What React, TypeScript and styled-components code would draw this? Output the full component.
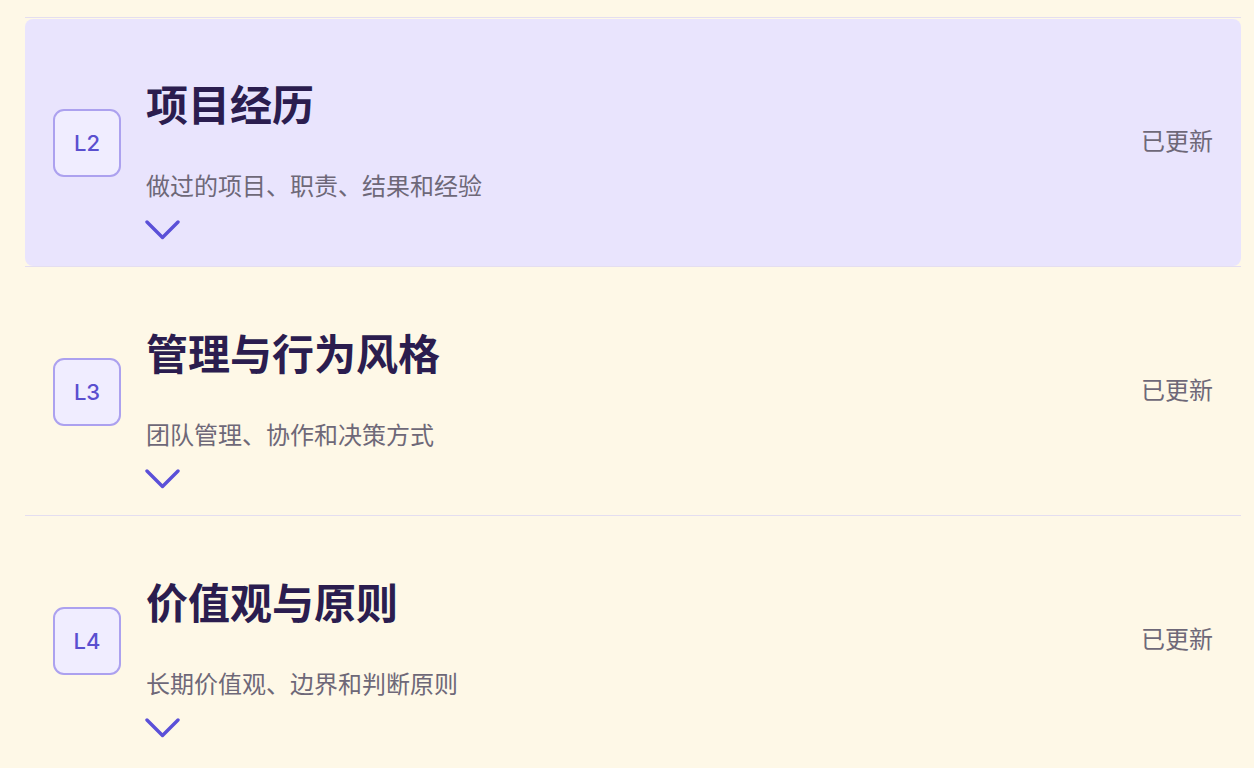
import React from "react";
import styled, { createGlobalStyle } from "styled-components";

const GlobalStyle = createGlobalStyle`
  html, body {
    margin: 0;
    padding: 0;
    background: #fef8e7;
  }
  body {
    font-family: "Noto Sans CJK SC", "Noto Sans", sans-serif;
  }
`;

const Page = styled.div`
  width: 1254px;
  height: 768px;
  overflow: hidden;
  background: #fef8e7;
  padding-top: 17px;
  box-sizing: border-box;
`;

const List = styled.div`
  margin-left: 25px;
  width: 1216px;
  display: flex;
  flex-direction: column;
`;

const Item = styled.div`
  border-top: 1px solid #e4def0;
  padding-top: 1px;
`;

const Card = styled.div<{ $active?: boolean }>`
  height: 247px;
  box-sizing: border-box;
  display: flex;
  align-items: center;
  padding: 0 28px;
  border-radius: 8px;
  background: ${(p) => (p.$active ? "#e9e4fd" : "transparent")};
`;

const Badge = styled.div`
  width: 68px;
  height: 68px;
  box-sizing: border-box;
  flex: none;
  border: 2px solid #aca1ef;
  border-radius: 11px;
  background: #f0edff;
  color: #5a4fcf;
  font-family: Inter, "Noto Sans", sans-serif;
  font-weight: 500;
  font-size: 22px;
  display: flex;
  align-items: center;
  justify-content: center;
`;

const TextBlock = styled.div`
  flex: 1;
  margin-left: 25px;
  padding-top: 33px;
  display: flex;
  flex-direction: column;
  align-items: flex-start;
`;

const Title = styled.div`
  font-size: 42px;
  line-height: 50px;
  font-weight: 700;
  color: #2b1d4f;
`;

const Subtitle = styled.div`
  margin-top: 40px;
  font-size: 24px;
  line-height: 34px;
  color: #6e6878;
`;

const Chevron = styled.svg`
  display: block;
  margin-top: 18px;
  margin-left: -1px;
`;

const Status = styled.div`
  flex: none;
  margin-bottom: 5px;
  font-size: 24px;
  line-height: 34px;
  color: #6e6878;
`;

const items = [
  { level: "L2", title: "项目经历", desc: "做过的项目、职责、结果和经验", active: true },
  { level: "L3", title: "管理与行为风格", desc: "团队管理、协作和决策方式", active: false },
  { level: "L4", title: "价值观与原则", desc: "长期价值观、边界和判断原则", active: false },
];

export default function App() {
  return (
    <>
      <GlobalStyle />
      <Page>
        <List>
          {items.map((it) => (
            <Item key={it.level}>
              <Card $active={it.active}>
                <Badge>{it.level}</Badge>
                <TextBlock>
                  <Title>{it.title}</Title>
                  <Subtitle>{it.desc}</Subtitle>
                  <Chevron width="35" height="20" viewBox="0 0 35 20">
                    <polyline
                      points="2,2 17.5,17.5 33,2"
                      fill="none"
                      stroke="#5b50d8"
                      strokeWidth="3.4"
                      strokeLinecap="round"
                      strokeLinejoin="round"
                    />
                  </Chevron>
                </TextBlock>
                <Status>已更新</Status>
              </Card>
            </Item>
          ))}
        </List>
      </Page>
    </>
  );
}
